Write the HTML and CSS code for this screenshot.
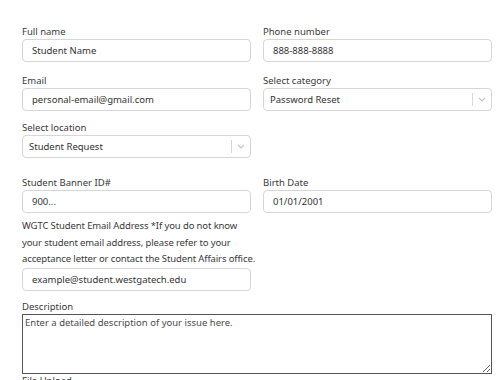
FILE: index.html
```html
<!DOCTYPE html>
<html lang="en">
<head>
    <meta charset="UTF-8">
    <meta name="viewport" content="width=device-width, initial-scale=1.0">
    <title>Student Support Request</title>
    <link rel="stylesheet" href="styles.css">
</head>
<body>
    <form class="ticket-form">
        <div class="row row-name">
            <div class="field">
                <label>Full name</label>
                <input type="text" value="Student Name">
            </div>
            <div class="field">
                <label>Phone number</label>
                <input type="text" value="888-888-8888">
            </div>
        </div>

        <div class="row row-email">
            <div class="field">
                <label>Email</label>
                <input type="text" value="personal-email@gmail.com">
            </div>
            <div class="field">
                <label>Select category</label>
                <div class="select">
                    <span class="select-value">Password Reset</span>
                    <span class="select-sep"></span>
                    <span class="select-arrow">
                        <svg width="8" height="5" viewBox="0 0 8 5"><path d="M1 1l3 3 3-3" fill="none" stroke="#c4c4c4" stroke-width="1.2"/></svg>
                    </span>
                </div>
            </div>
        </div>

        <div class="row row-location">
            <div class="field">
                <label>Select location</label>
                <div class="select">
                    <span class="select-value">Student Request</span>
                    <span class="select-sep"></span>
                    <span class="select-arrow">
                        <svg width="8" height="5" viewBox="0 0 8 5"><path d="M1 1l3 3 3-3" fill="none" stroke="#c4c4c4" stroke-width="1.2"/></svg>
                    </span>
                </div>
            </div>
            <div class="field"></div>
        </div>

        <div class="row row-banner">
            <div class="field">
                <label>Student Banner ID#</label>
                <input type="text" value="900...">
            </div>
            <div class="field">
                <label>Birth Date</label>
                <input type="text" value="01/01/2001">
            </div>
        </div>

        <div class="row row-wgtc">
            <div class="field">
                <label class="long">WGTC Student Email Address *If you do not know your student email address, please refer to your acceptance letter or contact the Student Affairs office.</label>
                <input type="text" value="example@student.westgatech.edu">
            </div>
            <div class="field"></div>
        </div>

        <div class="field wide">
            <label>Description</label>
            <textarea placeholder="Enter a detailed description of your issue here."></textarea>
        </div>

        <div class="field wide">
            <label>File Upload</label>
        </div>
    </form>
</body>
</html>
```

FILE: styles.css
```css
body {
    margin: 0;
    background: #fff;
    font-family: "Noto Sans", "Open Sans", sans-serif;
    font-size: 9.5px;
    color: #333;
}
.ticket-form {
    width: 470px;
    padding: 25px 0 0 22px;
}
.row {
    display: grid;
    grid-template-columns: 229px 229px;
    column-gap: 12px;
}
.row-name { margin-bottom: 12px; }
.row-email { margin-bottom: 10px; }
.row-location { margin-bottom: 18px; }
.row-banner { margin-bottom: 7px; }
.row-wgtc { margin-bottom: 9px; }
.field {
    display: flex;
    flex-direction: column;
}
label {
    display: block;
    height: 14px;
    line-height: 14px;
    color: #3a3a3a;
}
label.long {
    width: 234px;
    height: auto;
    line-height: 16.5px;
    letter-spacing: -0.12px;
    margin-top: -2px;
}
input, .select {
    box-sizing: border-box;
    height: 23px;
    border: 1px solid #d6d6d6;
    border-radius: 4px;
    font-family: inherit;
    font-size: 9.5px;
    color: #333;
}
input {
    padding: 0 9px;
    outline: none;
}
.select {
    display: flex;
    align-items: center;
    padding-left: 6px;
}
.select-value {
    flex: 1;
}
.select-sep {
    width: 1px;
    height: 13px;
    background: #d8d8d8;
}
.select-arrow {
    width: 18px;
    display: flex;
    justify-content: center;
}
textarea {
    box-sizing: border-box;
    width: 470px;
    height: 60px;
    margin: 0;
    padding: 1px 2px;
    border: 1px solid #555;
    border-radius: 0;
    font-family: inherit;
    font-size: 9.5px;
    color: #333;
}
textarea::placeholder {
    color: #4a4a4a;
}
```
